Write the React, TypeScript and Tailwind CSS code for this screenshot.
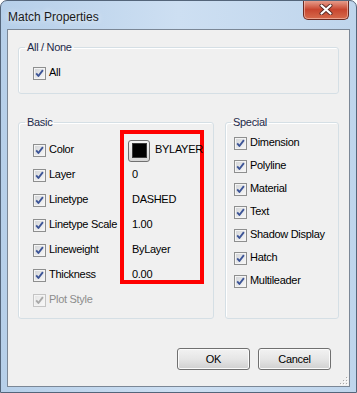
import React from "react";

const Check = ({ disabled }: { disabled?: boolean }) => {
  const id = disabled ? "cbd" : "cbe";
  return (
    <svg width="13" height="13" viewBox="0 0 13 13" className="shrink-0">
      <defs>
        <linearGradient id={id} x1="0" y1="0" x2="1" y2="1">
          <stop offset="0" stopColor={disabled ? "#e6e6e6" : "#d4d6d9"} />
          <stop offset="1" stopColor={disabled ? "#f7f7f7" : "#f6f6f6"} />
        </linearGradient>
      </defs>
      <rect x="0.5" y="0.5" width="12" height="12" fill="#f4f4f4" stroke={disabled ? "#c4c4c4" : "#8e8f8f"} />
      <rect x="2" y="2" width="9" height="9" fill={`url(#${id})`} />
      <path
        d="M3.2 6.4 L5.4 9 L9.9 3.1"
        fill="none"
        stroke={disabled ? "#a9a9a9" : "#3d5597"}
        strokeWidth="1.9"
        strokeLinejoin="round"
      />
    </svg>
  );
};

const CheckRow = ({
  label,
  h,
  disabled,
}: {
  label: string;
  h: string;
  disabled?: boolean;
}) => (
  <div className={`flex items-center shrink-0 ${h}`}>
    <Check disabled={disabled} />
    <span
      className={`ml-[3px] mb-[2px] leading-[13px] whitespace-nowrap ${
        disabled ? "text-[#8d8d8d]" : "text-black"
      }`}
    >
      {label}
    </span>
  </div>
);

const basicRows = ["Color", "Layer", "Linetype", "Linetype Scale", "Lineweight", "Thickness"];
const basicValues = ["0", "DASHED", "1.00", "ByLayer", "0.00"];
const specialRows = ["Dimension", "Polyline", "Material", "Text", "Shadow Display", "Hatch", "Multileader"];

const Button = ({ children }: { children: React.ReactNode }) => (
  <button className="w-[73px] h-[22px] rounded-[3px] border border-[#707070] bg-linear-to-b from-[#f2f2f2] via-[#e6e6e6] to-[#d0d0d0] shadow-[inset_0_0_0_1px_#fbfbfb] text-black leading-none">
    {children}
  </button>
);

export default function App() {
  return (
    <div className="w-[357px] h-[393px] flex flex-col border border-[#54657a] rounded-t-[7px] bg-linear-to-r from-[#b6cfe9] via-[#cddff2] to-[#bfd5ec] px-[6px] pb-[5px] font-['Liberation_Sans',Arial,sans-serif] text-[11px] tracking-[-0.3px] overflow-hidden">
      {/* title bar */}
      <div className="h-[28px] flex items-start justify-between shrink-0">
        <div className="mt-[7px] ml-[1px] text-[12px] tracking-normal text-[#1a1a1a] [text-shadow:0_0_6px_#ffffff]">
          Match Properties
        </div>
        <div className="-mt-[1px] mr-[1px] w-[46px] h-[20px] rounded-b-[5px] border border-[#6b2a22] border-t-0 bg-linear-to-b from-[#e8a494] via-[#c8452f] to-[#d66a4c] shadow-[inset_0_0_0_1px_rgba(255,220,210,0.5)] flex items-center justify-center">
          <svg width="14" height="11" viewBox="0 0 14 11">
            <path d="M2.5 1.5 L11.5 9.5 M11.5 1.5 L2.5 9.5" stroke="#5a2a25" strokeWidth="4" strokeLinecap="round" />
            <path d="M2.5 1.5 L11.5 9.5 M11.5 1.5 L2.5 9.5" stroke="#ffffff" strokeWidth="2.2" strokeLinecap="round" />
          </svg>
        </div>
      </div>

      {/* client */}
      <div className="flex-1 border border-[#7b8796] bg-[#f0f0f0] flex flex-col">
        <fieldset className="mt-[11px] mx-[10px] border border-[#d5dfe5] rounded-[3px] min-w-0 shadow-[inset_1px_1px_0_#ffffff]">
          <legend className="ml-[6px] px-[2px] leading-[13px] text-[#1e2a4a]">All / None</legend>
          <div className="pl-[14px] pt-[13px] pb-[13px]">
            <CheckRow label="All" h="h-[13px]" />
          </div>
        </fieldset>

        <div className="mt-[22px] ml-[10px] flex gap-[11px]">
          <fieldset className="w-[196px] h-[203px] border border-[#d5dfe5] rounded-[3px] min-w-0 shadow-[inset_1px_1px_0_#ffffff]">
            <legend className="ml-[6px] px-[2px] leading-[13px] text-[#1e2a4a]">Basic</legend>
            <div className="flex">
              <div className="w-[101px] shrink-0 pl-[14px] pt-[9px] flex flex-col">
                {basicRows.map((r) => (
                  <CheckRow key={r} label={r} h="h-[25px]" />
                ))}
                <CheckRow label="Plot Style" h="h-[25px]" disabled />
              </div>
              <div className="mt-[1px] w-[84px] h-[154px] shrink-0 border-[4px] border-[#ff0000] pt-[4px] flex flex-col">
                <div className="h-[25px] shrink-0 flex items-center">
                  <div className="ml-[4px] w-[22px] h-[22px] shrink-0 rounded-[3px] border border-[#707070] bg-linear-to-b from-[#f4f4f4] to-[#d6d6d6] flex items-center justify-center">
                    <div className="w-[15px] h-[15px] bg-black border border-[#3a3a3a]" />
                  </div>
                  <span className="ml-[5px] mb-[2px] leading-[13px] text-black">BYLAYER</span>
                </div>
                {basicValues.map((v) => (
                  <div key={v} className="h-[25px] shrink-0 flex items-center pl-[8px] text-black">
                    <span className="mb-[2px] leading-[13px]">{v}</span>
                  </div>
                ))}
              </div>
            </div>
          </fieldset>

          <fieldset className="w-[114px] h-[203px] border border-[#d5dfe5] rounded-[3px] min-w-0 shadow-[inset_1px_1px_0_#ffffff]">
            <legend className="ml-[5px] px-[2px] leading-[13px] text-[#1e2a4a]">Special</legend>
            <div className="pl-[8px] pt-[3px] flex flex-col">
              {specialRows.map((r) => (
                <CheckRow key={r} label={r} h="h-[23px]" />
              ))}
            </div>
          </fieldset>
        </div>

        <div className="mt-[29px] mr-[18px] flex justify-end gap-[8px]">
          <Button>OK</Button>
          <Button>Cancel</Button>
        </div>

        <div className="mt-auto flex justify-end pr-[1px] pb-[1px]">
          <svg width="9" height="9" viewBox="0 0 9 9">
            {[
              [7, 1],
              [7, 4],
              [4, 4],
              [7, 7],
              [4, 7],
              [1, 7],
            ].map(([x, y]) => (
              <g key={`${x}-${y}`}>
                <rect x={x + 1} y={y + 1} width="1" height="1" fill="#ffffff" />
                <rect x={x} y={y} width="1" height="1" fill="#a8a8a8" />
              </g>
            ))}
          </svg>
        </div>
      </div>
    </div>
  );
}
